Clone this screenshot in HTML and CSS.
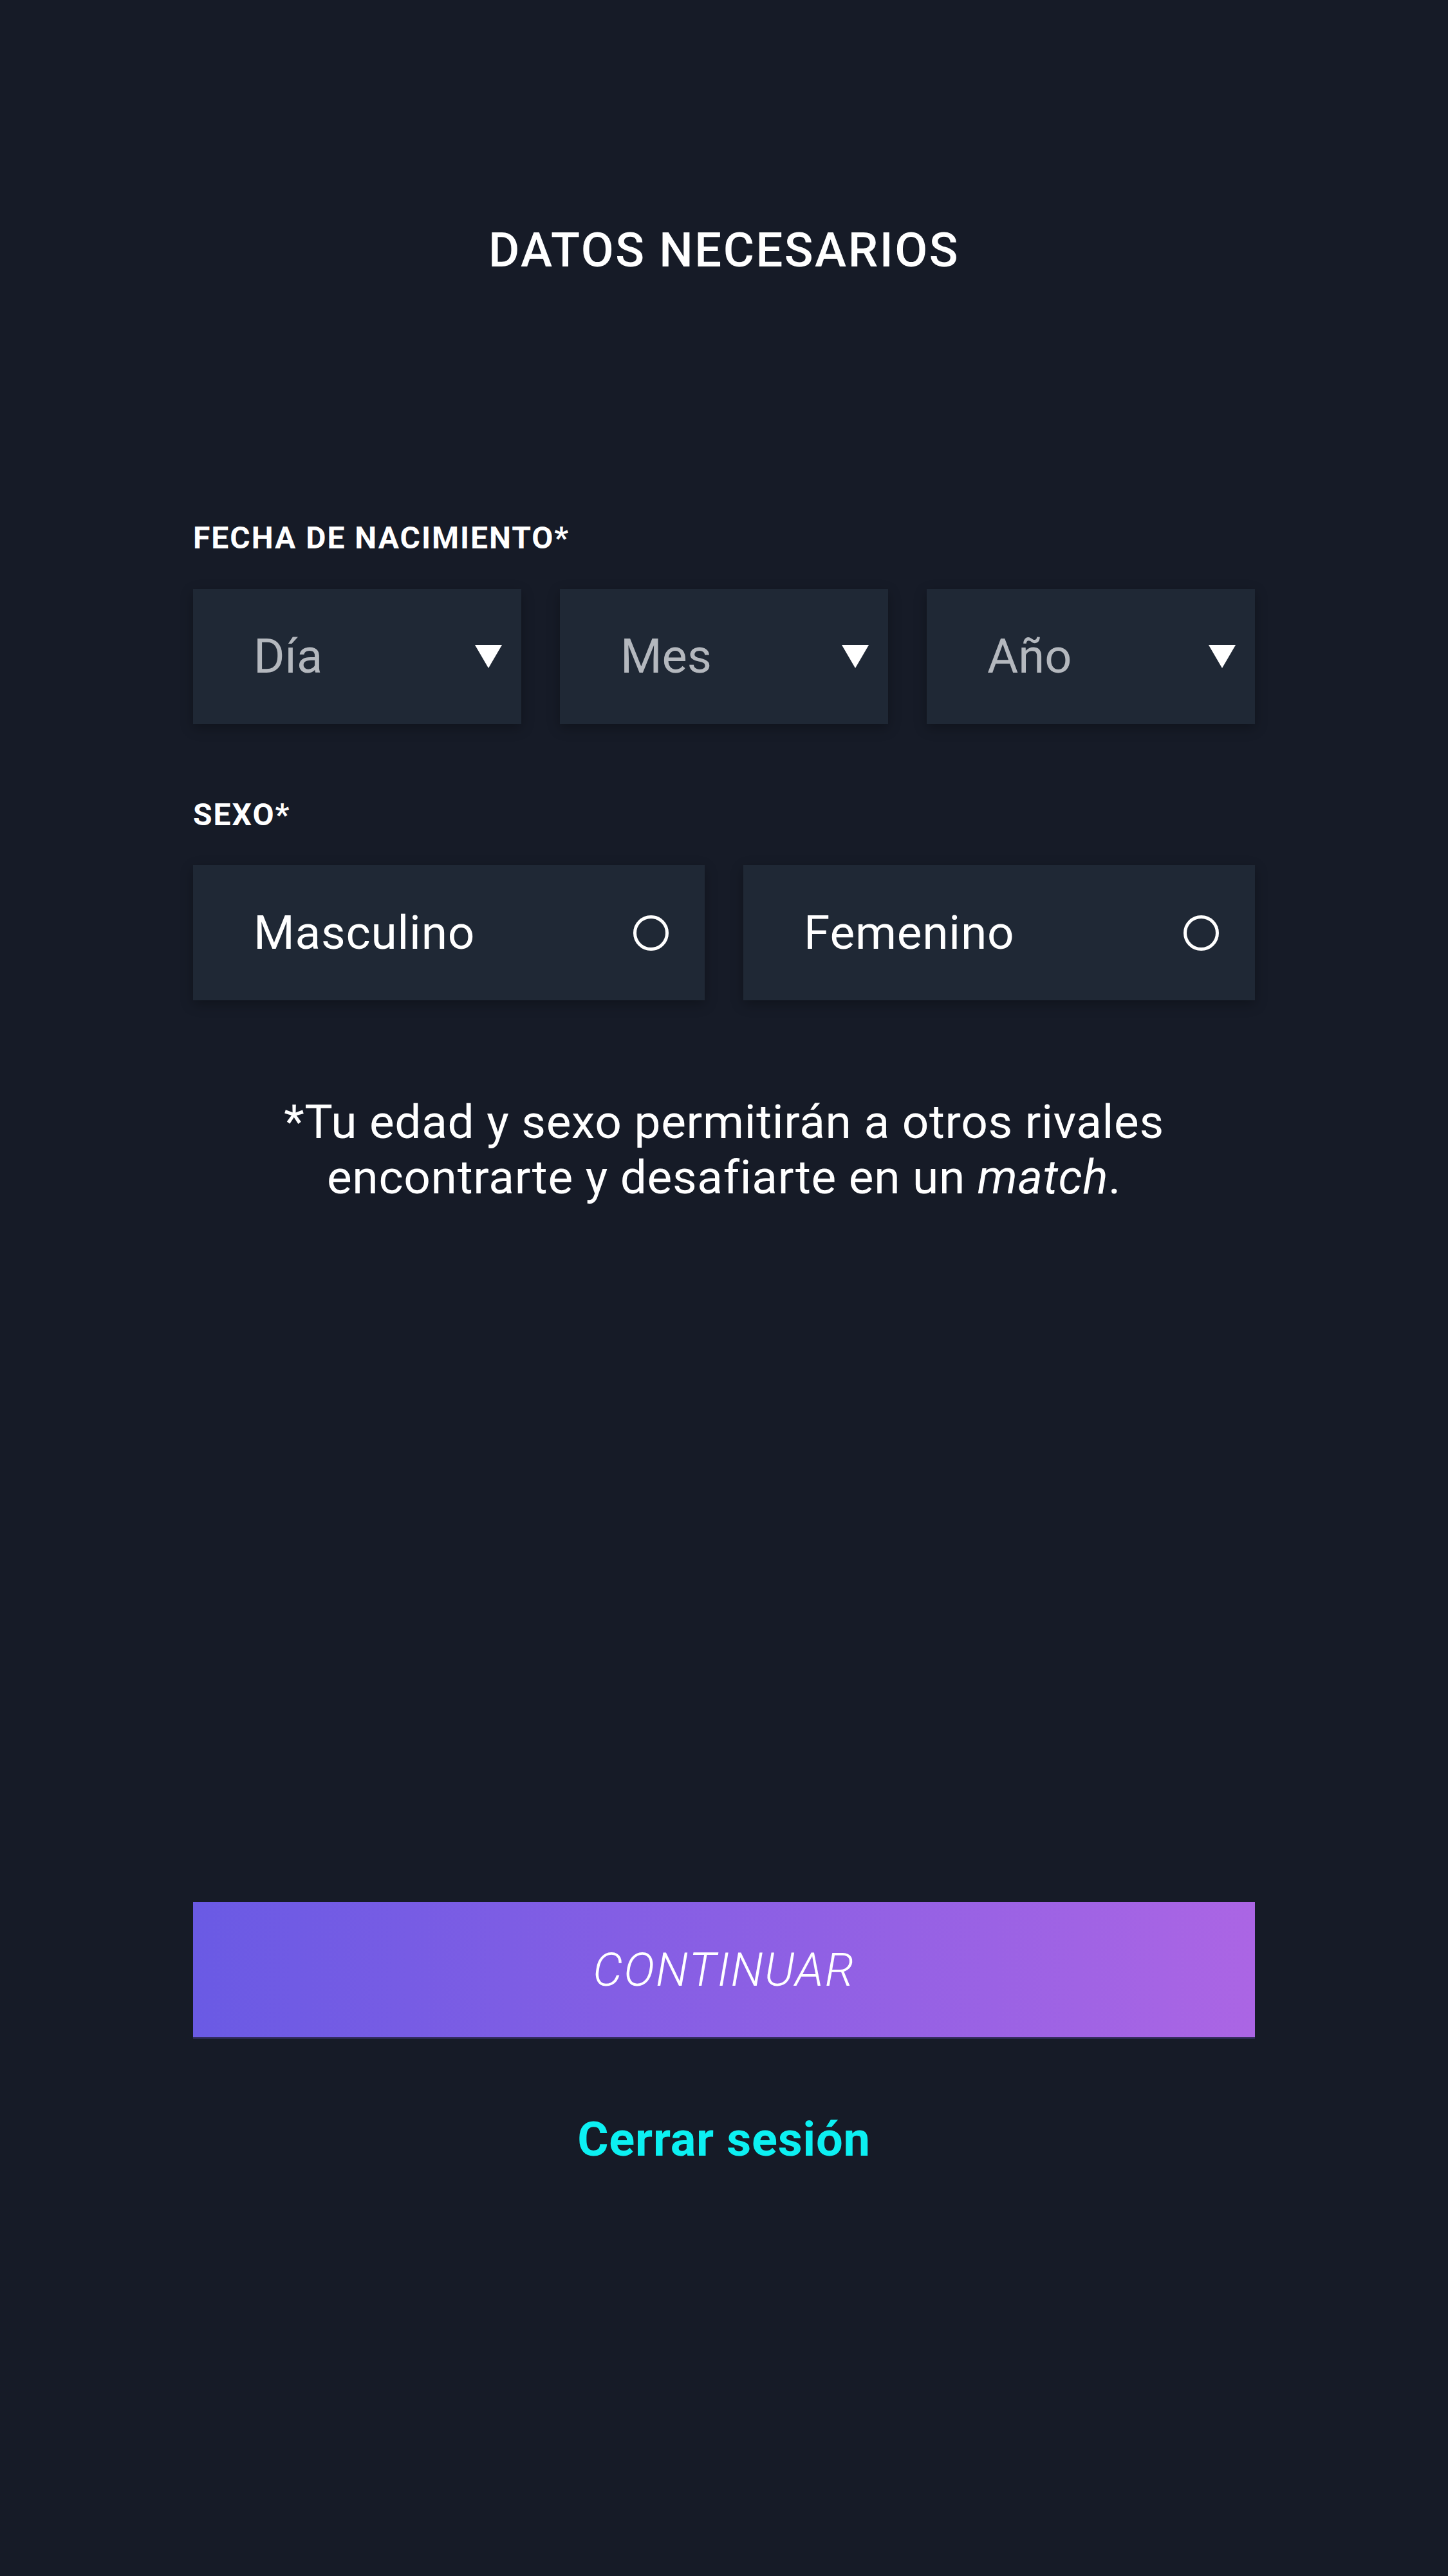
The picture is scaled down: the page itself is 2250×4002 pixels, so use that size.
FILE: index.html
```html
<!DOCTYPE html>
<html lang="es">
<head>
<meta charset="utf-8">
<title>Datos necesarios</title>
<link rel="stylesheet" href="styles.css">
</head>
<body>
<main class="page">
  <h1 class="title">DATOS NECESARIOS</h1>

  <section class="field field-date">
    <div class="label">FECHA DE NACIMIENTO*</div>
    <div class="selects">
      <div class="select"><span class="placeholder">Día</span><span class="arrow"></span></div>
      <div class="select"><span class="placeholder">Mes</span><span class="arrow"></span></div>
      <div class="select"><span class="placeholder">Año</span><span class="arrow"></span></div>
    </div>
  </section>

  <section class="field field-sex">
    <div class="label">SEXO*</div>
    <div class="radios">
      <div class="radio"><span class="radio-text">Masculino</span><span class="circle"></span></div>
      <div class="radio"><span class="radio-text">Femenino</span><span class="circle"></span></div>
    </div>
  </section>

  <p class="note">*Tu edad y sexo permitirán a otros rivales<br>encontrarte y desafiarte en un <em>match</em>.</p>

  <div class="actions">
    <button class="continue">CONTINUAR</button>
    <a class="logout">Cerrar sesión</a>
  </div>
</main>
</body>
</html>
```

FILE: styles.css
```css
html, body {
  margin: 0;
  padding: 0;
  background: #161b27;
}

body {
  min-height: 4002px;
  font-family: Roboto, "Liberation Sans", Arial, sans-serif;
  color: #ffffff;
}

.page {
  width: 1650px;
  margin: 0 auto;
  padding-top: 352px;
  display: flex;
  flex-direction: column;
}

.title {
  margin: 0;
  font-size: 74px;
  font-weight: 500;
  line-height: 1;
  text-align: center;
  letter-spacing: 2.5px;
}

.field {
  display: flex;
  flex-direction: column;
  gap: 55px;
}

.field-date {
  margin-top: 386px;
}

.field-sex {
  margin-top: 117px;
  gap: 54px;
}

.label {
  font-size: 48px;
  font-weight: 700;
  line-height: 1;
  letter-spacing: 2px;
}

.selects {
  display: grid;
  grid-template-columns: repeat(3, 1fr);
  gap: 60px;
}

.select,
.radio {
  height: 210px;
  background: #1f2835;
  box-shadow: 0 6px 18px rgba(0, 0, 0, 0.28);
  display: flex;
  align-items: center;
  justify-content: space-between;
  padding-left: 94px;
  box-sizing: border-box;
}

.select {
  padding-right: 30px;
}

.placeholder {
  font-size: 74px;
  color: #b4b8be;
  line-height: 1;
}

.arrow {
  width: 0;
  height: 0;
  border-left: 21px solid transparent;
  border-right: 21px solid transparent;
  border-top: 36px solid #ffffff;
}

.radios {
  display: grid;
  grid-template-columns: 1fr 1fr;
  gap: 60px;
}

.radio {
  padding-right: 56px;
}

.radio-text {
  font-size: 73px;
  line-height: 1;
  color: #ffffff;
  letter-spacing: 0.8px;
}

.circle {
  width: 55px;
  height: 55px;
  border: 5px solid #ffffff;
  border-radius: 50%;
  box-sizing: border-box;
}

.note {
  margin: 146px 0 0;
  font-size: 73px;
  line-height: 86px;
  text-align: center;
  letter-spacing: 0.7px;
}

.note em {
  font-style: italic;
}

.actions {
  margin-top: 1083px;
  display: flex;
  flex-direction: column;
  align-items: center;
  gap: 122px;
}

.continue {
  width: 100%;
  height: 210px;
  border: 0;
  margin: 0;
  padding: 0;
  background: linear-gradient(90deg, #6a5ae4 0%, #8a5fe4 50%, #ab65e4 100%);
  box-shadow: 0 3px 0 rgba(60, 50, 110, 0.6);
  color: #ffffff;
  font-family: Roboto, "Liberation Sans", Arial, sans-serif;
  font-size: 73px;
  font-weight: 300;
  font-style: italic;
  line-height: 1;
  letter-spacing: 2px;
}

.logout {
  font-size: 74px;
  font-weight: 700;
  line-height: 1;
  color: #0cf0f2;
  text-decoration: none;
  letter-spacing: 0.8px;
}
```
